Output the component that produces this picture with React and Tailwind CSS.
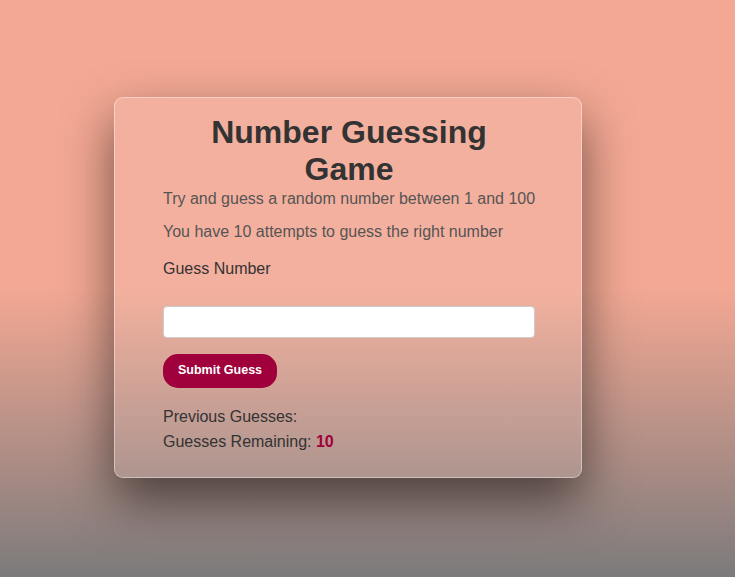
import React from 'react';

function App() {
  return (
    <div className="min-h-[577px] w-full bg-[linear-gradient(to_bottom,#f3a893_0%,#f3a893_50%,#7c7a7b_100%)] pt-[97px] pl-[114px] font-['Liberation_Sans',Arial,sans-serif]">
      <div className="w-[468px] rounded-[9px] border border-white/40 bg-white/10 pt-[16px] pb-[26px] pl-[48px] pr-[46px] shadow-[0_22px_50px_rgba(0,0,0,0.55)]">
        <h1 className="text-center text-[32px] font-bold leading-[1.15] text-[#333]">
          Number Guessing Game
        </h1>
        <p className="mt-[2px] whitespace-nowrap text-[16px] leading-[18px] text-[#555]">
          Try and guess a random number between 1 and 100
        </p>
        <p className="mt-[15px] text-[16px] leading-[18px] text-[#555]">
          You have 10 attempts to guess the right number
        </p>
        <label className="mt-[19px] block text-[16px] leading-[18px] text-[#333]">
          Guess Number
        </label>
        <input
          type="text"
          className="mt-[28px] block h-[32px] w-full rounded-[4px] border border-[#ccc] bg-white px-2 outline-none"
        />
        <button className="mt-[16px] h-[34px] rounded-[15px] bg-[#a0003b] px-[15px] text-[12.5px] font-bold text-white">
          Submit Guess
        </button>
        <p className="mt-[20px] text-[16px] leading-[18px] text-[#333]">
          Previous Guesses:
        </p>
        <p className="mt-[7px] text-[16px] leading-[18px] text-[#333]">
          Guesses Remaining: <span className="font-bold text-[#a0003b]">10</span>
        </p>
      </div>
    </div>
  );
}

export default App;
